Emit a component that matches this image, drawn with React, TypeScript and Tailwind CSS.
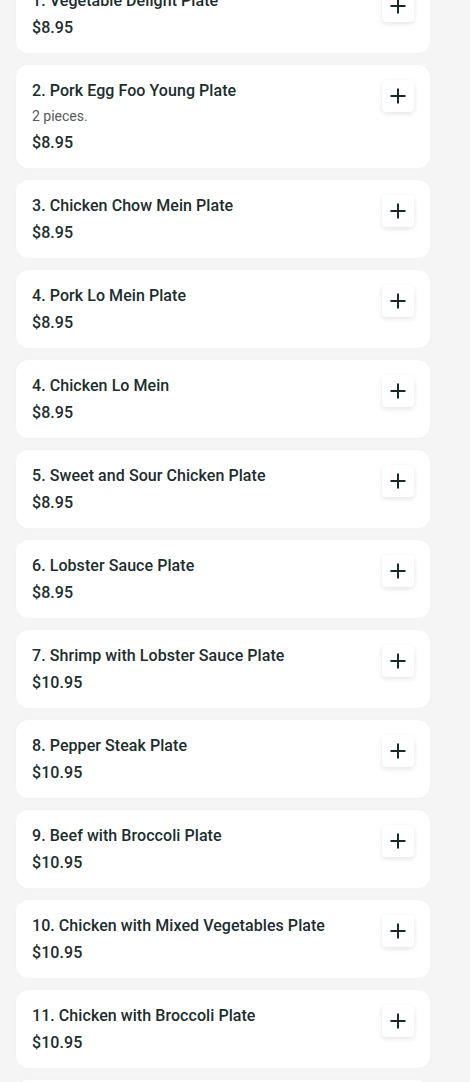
import React from "react";

type Item = { name: string; price: string; desc?: string };

const items: Item[] = [
  { name: "1. Vegetable Delight Plate", price: "$8.95" },
  { name: "2. Pork Egg Foo Young Plate", price: "$8.95", desc: "2 pieces." },
  { name: "3. Chicken Chow Mein Plate", price: "$8.95" },
  { name: "4. Pork Lo Mein Plate", price: "$8.95" },
  { name: "4. Chicken Lo Mein", price: "$8.95" },
  { name: "5. Sweet and Sour Chicken Plate", price: "$8.95" },
  { name: "6. Lobster Sauce Plate", price: "$8.95" },
  { name: "7. Shrimp with Lobster Sauce Plate", price: "$10.95" },
  { name: "8. Pepper Steak Plate", price: "$10.95" },
  { name: "9. Beef with Broccoli Plate", price: "$10.95" },
  { name: "10. Chicken with Mixed Vegetables Plate", price: "$10.95" },
  { name: "11. Chicken with Broccoli Plate", price: "$10.95" },
  { name: "12. Beef with Mixed Vegetables Plate", price: "$10.95" },
];

function PlusIcon() {
  return (
    <svg width="18" height="18" viewBox="0 0 18 18" fill="none">
      <path d="M9 1.5V16.5M1.5 9H16.5" stroke="#18292a" strokeWidth="2" />
    </svg>
  );
}

export default function App() {
  return (
    <div className="h-[1082px] overflow-hidden bg-[#f5f5f5]" style={{ fontFamily: "Roboto, 'Noto Sans', sans-serif" }}>
      <div className="-mt-[25px] flex flex-col gap-3 pl-4">
        {items.map((it, i) => (
          <div key={i} className="flex w-[414px] items-start justify-between rounded-xl bg-white pl-4 pr-4 pt-4 pb-[15px] shadow-[0_0_2px_rgba(0,0,0,0.04)]">
            <div className="flex flex-col">
              <div className="text-[16px] font-medium leading-5 tracking-[0.004em] text-[#1c2d2e]">{it.name}</div>
              {it.desc && <div className="mt-[5px] text-[14px] leading-5 text-[#555a5c]">{it.desc}</div>}
              <div className="mt-[7px] text-[16px] font-medium leading-5 tracking-[0.004em] text-[#1c2d2e]">{it.price}</div>
            </div>
            <button className="-mt-px flex h-8 w-8 items-center justify-center rounded bg-white shadow-[0_2px_5px_rgba(0,0,0,0.1)]">
              <PlusIcon />
            </button>
          </div>
        ))}
      </div>
    </div>
  );
}
